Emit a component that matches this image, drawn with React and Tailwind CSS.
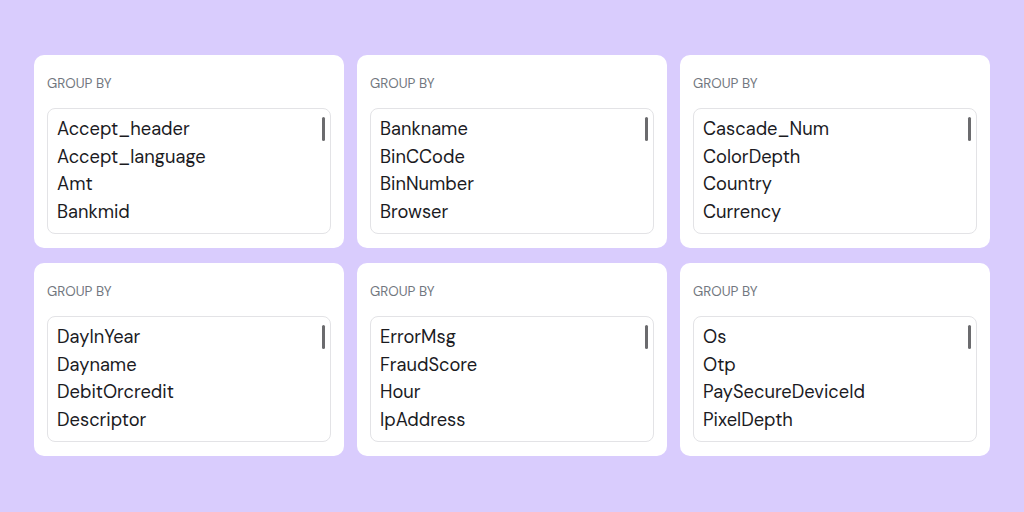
const groups = [
  ["Accept_header", "Accept_language", "Amt", "Bankmid"],
  ["Bankname", "BinCCode", "BinNumber", "Browser"],
  ["Cascade_Num", "ColorDepth", "Country", "Currency"],
  ["DayInYear", "Dayname", "DebitOrcredit", "Descriptor"],
  ["ErrorMsg", "FraudScore", "Hour", "IpAddress"],
  ["Os", "Otp", "PaySecureDeviceId", "PixelDepth"],
];

function GroupCard({ items }) {
  return (
    <div className="flex h-[193px] flex-col rounded-[10px] bg-white px-[13px] pt-[21px]">
      <div className="text-[13.5px] leading-4 text-[#727780]">GROUP BY</div>
      <div className="relative mt-[16px] h-[126px] overflow-hidden rounded-[8px] border border-[#e3e3e6] px-[9px] pt-[7px]">
        {items.map((it) => (
          <div key={it} className="text-[18.3px] leading-[27.5px] text-[#1b1b1f]">
            {it}
          </div>
        ))}
        <div className="absolute right-[5px] top-[8px] h-[24px] w-[3px] rounded-full bg-[#6b6b6e]" />
      </div>
    </div>
  );
}

export default function App() {
  return (
    <div
      className="flex h-[512px] w-[1024px] items-start bg-[#d9ccfd] px-[34px] pt-[55px]"
      style={{ fontFamily: '"DM Sans", Inter, "Noto Sans", sans-serif' }}
    >
      <div className="grid w-full grid-cols-3 gap-x-[13px] gap-y-[15px]">
        {groups.map((g, i) => (
          <GroupCard key={i} items={g} />
        ))}
      </div>
    </div>
  );
}
